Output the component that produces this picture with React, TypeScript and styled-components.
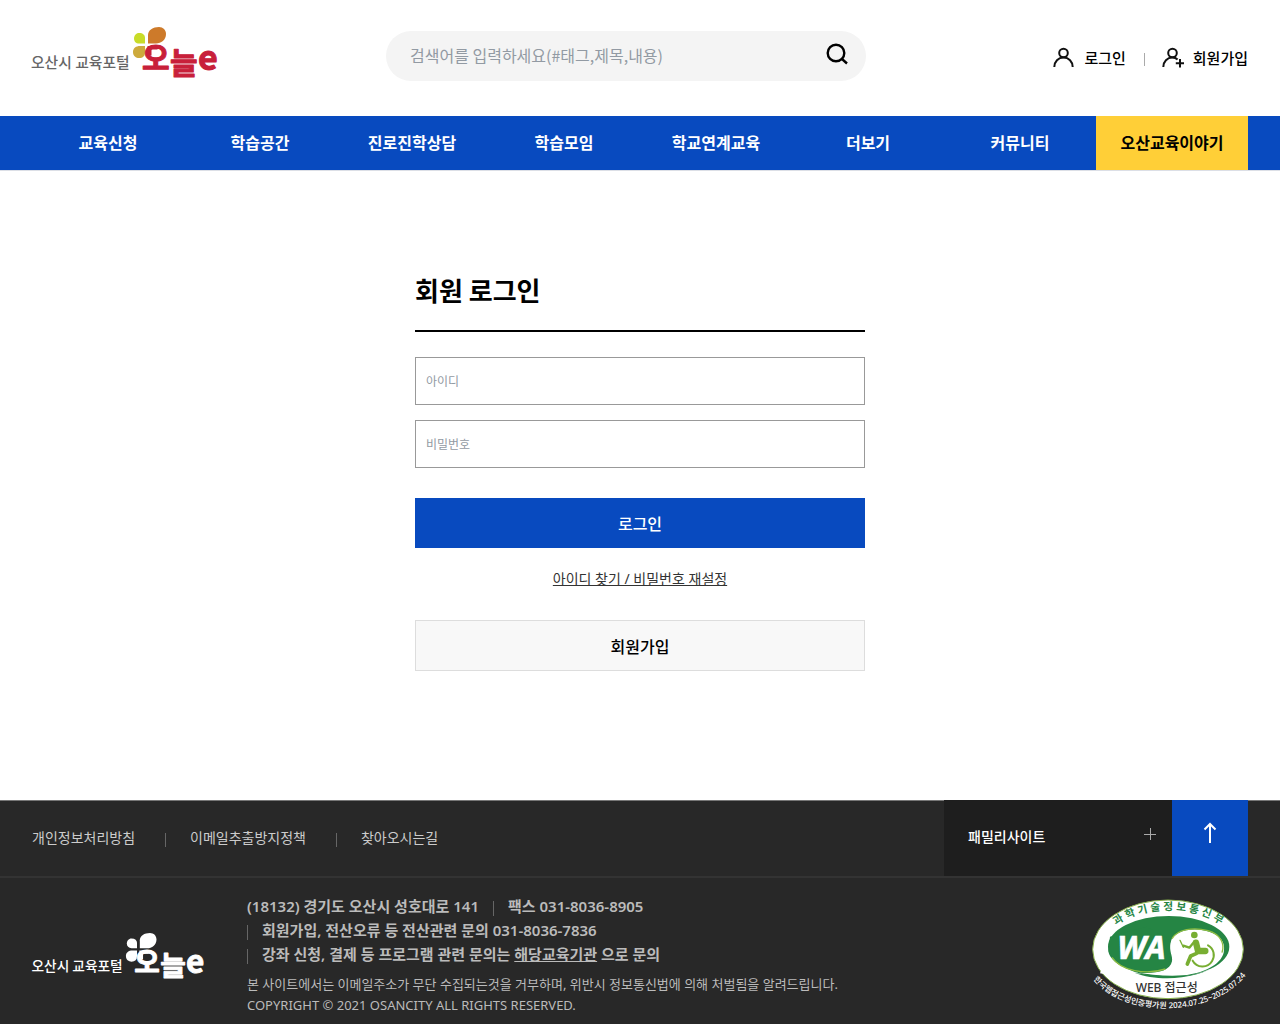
import React from "react";
import styled, { createGlobalStyle } from "styled-components";

const BLUE = "#084abf";
const FONT = '"Noto Sans", "Noto Sans CJK KR", sans-serif';
const FONT_KR = '"Noto Sans CJK KR", sans-serif';

const GlobalStyle = createGlobalStyle`
  *, *::before, *::after { box-sizing: border-box; }
  body { margin: 0; background: #fff; color: #000; font-family: ${FONT}; font-size: 16px; line-height: 24px; }
  a { color: inherit; text-decoration: none; }
  ul, p, h1 { margin: 0; padding: 0; }
  ul { list-style: none; }
  button, input { font-family: inherit; margin: 0; }
  button { cursor: pointer; }
`;

const Page = styled.div`
  display: flex;
  flex-direction: column;
  min-height: 100vh;
`;

const Header = styled.header`
  display: flex;
  align-items: center;
  height: 116px;
  padding: 0 32px;
`;

const LogoLink = styled.a`
  display: block;
  flex: none;
  line-height: 0;
`;

const LogoDrawing = styled.svg`
  overflow: visible;
`;

const HeaderLogo = styled(LogoLink)`
  margin: 0 168px 10px 0;
`;

const SearchForm = styled.form`
  display: flex;
  align-items: center;
  flex: 0 1 480px;
  height: 50px;
  margin-bottom: 4px;
  padding: 0 17px 0 24px;
  border-radius: 25px;
  background: #f4f4f4;
`;

const SearchInput = styled.input`
  flex: 1;
  min-width: 0;
  height: 48px;
  padding: 0 0 2px;
  border: 0;
  outline: 0;
  background: transparent;
  font-family: ${FONT_KR};
  font-size: 16px;
  &::placeholder { color: #929aa3; opacity: 1; }
`;

const IconButton = styled.button`
  display: flex;
  padding: 0 0 4px;
  border: 0;
  background: transparent;
`;

const UserMenu = styled.ul`
  display: flex;
  align-items: center;
  margin-left: auto;
`;

const UserItem = styled.li`
  display: flex;
  align-items: center;
  & + &::before {
    content: "";
    width: 1px;
    height: 13px;
    margin: 2px 17px 0 18px;
    background: #aaa;
  }
`;

const UserLink = styled.a`
  display: flex;
  align-items: center;
  gap: 9px;
  font-size: 15px;
  font-weight: 500;
`;

const Nav = styled.nav`
  padding: 0 32px;
  background: ${BLUE};
  border-bottom: 1px solid #dcdfe6;
`;

const NavList = styled.ul`
  display: grid;
  grid-template-columns: repeat(8, 1fr);
`;

const NavLink = styled.a<{ $accent?: boolean }>`
  display: block;
  height: 54px;
  line-height: 54px;
  text-align: center;
  font-weight: 700;
  color: ${(p) => (p.$accent ? "#000" : "#fff")};
  background: ${(p) => (p.$accent ? "#ffcf37" : "transparent")};
`;

const Main = styled.main`
  display: flex;
  flex-direction: column;
  flex: 1;
  width: 100%;
  max-width: 450px;
  margin: 0 auto;
  padding: 99px 0 129px;
`;

const Title = styled.h1`
  padding-bottom: 20px;
  margin-bottom: 25px;
  border-bottom: 2px solid #000;
  font-family: ${FONT_KR};
  font-size: 26px;
  line-height: 40px;
  font-weight: 700;
`;

const LoginForm = styled.form`
  display: flex;
  flex-direction: column;
  gap: 15px;
`;

const Field = styled.input`
  width: 100%;
  height: 48px;
  padding: 0 10px;
  border: 1px solid #999;
  border-radius: 0;
  background: #fff;
  font-size: 12px;
  &::placeholder { color: #929aa3; opacity: 1; }
`;

const SubmitButton = styled.button`
  height: 50px;
  margin-top: 15px;
  padding: 0;
  border: 0;
  background: ${BLUE};
  color: #fff;
  font-size: 16px;
  font-weight: 500;
`;

const FindLink = styled.a`
  align-self: center;
  margin: 19px 0 29px;
  color: #333;
  font-size: 14px;
  text-decoration: underline;
`;

const JoinLink = styled.a`
  height: 51px;
  border: 1px solid #ddd;
  background: #f8f8f8;
  line-height: 52px;
  text-align: center;
  font-weight: 500;
`;

const Footer = styled.footer`
  background: #282828;
  color: #bbb;
`;

const FooterBar = styled.div`
  display: flex;
  justify-content: space-between;
  height: 78px;
  padding: 0 32px;
  border-bottom: 2px solid #333;
  box-shadow: inset 0 1px 0 #777;
`;

const PolicyList = styled.ul`
  display: flex;
  align-items: center;
`;

const PolicyItem = styled.li`
  display: flex;
  align-items: center;
  font-size: 14px;
  color: #ccc;
  & + &::before {
    content: "";
    width: 1px;
    height: 14px;
    margin: 4px 24px 0 30px;
    background: #666;
  }
`;

const FooterActions = styled.div`
  display: flex;
`;

const FamilyButton = styled.button`
  display: flex;
  align-items: center;
  justify-content: space-between;
  width: 228px;
  padding: 0 16px 4px 24px;
  border: 0;
  background: #1e1e1e;
  color: #fff;
  font-size: 14px;
  font-weight: 500;
`;

const TopLink = styled.a`
  display: flex;
  align-items: center;
  justify-content: center;
  width: 76px;
  padding-bottom: 10px;
  background: ${BLUE};
`;

const FooterBody = styled.div`
  display: flex;
  align-items: flex-start;
  padding: 16px 32px 8px;
`;

const FooterLogo = styled(LogoLink)`
  margin: 38px 42px 0 0;
`;

const Contact = styled.div`
  flex: 1;
  font-size: 15px;
  font-weight: 600;
`;

const ContactRow = styled.p`
  display: flex;
  align-items: center;
`;

const Separator = styled.span<{ $inner?: boolean }>`
  width: 1px;
  height: 15px;
  margin: 4px 14px 0 ${(p) => (p.$inner ? "14px" : "0")};
  background: #666;
`;

const Underlined = styled.a`
  text-decoration: underline;
`;

const Notice = styled.p`
  margin-top: 8px;
  font-size: 13px;
  line-height: 21px;
  font-weight: 400;
`;

const Badge = styled.a`
  flex: none;
  margin-top: 2px;
  line-height: 0;
`;

function Logo({ width, mono }: { width: number; mono?: boolean }) {
  const c = (colour: string) => (mono ? "#fff" : colour);
  const red = c("#c8203a");
  return (
    <LogoDrawing width={width} height={Math.round((width * 54) / 186)} viewBox="0 0 186 54" role="img" aria-label="오산시 교육포털 오늘e">
      <path d="M116 17.500V9C116 4 121 1 127 1c4 0 7 3 7 7 0 6-5 9.500-10 9.500Z" fill={c("#cd7a2a")} />
      <path d="M113 17.500h-6c-3 0-5-2-5-5s2-5.500 5-5.500c4 0 6 2 6 5Z" fill={c("#c8dc28")} />
      <path d="M113 20v6c0 4-2 6-6 6-3 0-6-2-6-6 0-4 3-6 7-6Z" fill={c("#cdaa3c")} />
      <path d="M115.500 20h10v3.500h-6v6h-4Z" fill={red} />
      <g fontFamily={FONT_KR}>
        <text x="-1" y="42" fontSize="14.800" fontWeight="500" fill={c("#666")}>오산시 교육포털</text>
        <g fontWeight="700" fill={red} stroke={red} strokeWidth="1" strokeLinejoin="round">
          <text x="110" y="43" fontSize="30">오</text>
          <text x="138" y="48" fontSize="30">늘</text>
          <text x="166" y="44" fontSize="34">e</text>
        </g>
      </g>
    </LogoDrawing>
  );
}

function UserIcon({ plus }: { plus?: boolean }) {
  return (
    <svg width="22" height="22" viewBox="0 0 22 22" fill="none" stroke="#111" strokeWidth="2" aria-hidden="true">
      <circle cx="10.500" cy="6" r="4.300" />
      <path d={plus ? "M1.300 20c0-5.500 4-9.500 9-9.500 2 0 4 .7 5.300 2" : "M1.300 20c0-5.500 4-9.500 9.200-9.500s9.200 4 9.200 9.500"} />
      {plus && <path d="M18 12v8.500M13.800 16.200h8.200" />}
    </svg>
  );
}

function WebAccessibilityMark() {
  return (
    <svg width="160" height="115" viewBox="24 18 480 345" role="img" aria-label="과학기술정보통신부 WEB 접근성">
      <defs>
        <path id="ministry" d="M108 106C190 46 340 46 422 104" />
        <path id="validity" d="M38 266C130 386 400 386 500 254" />
      </defs>
      <ellipse cx="264" cy="178" rx="226" ry="148" fill="#fff" stroke="#86b04a" strokeWidth="3" />
      <ellipse cx="266" cy="170" rx="182" ry="92" fill="#258544" />
      <path d="M84 188C92 222 130 243 178 248C222 252 270 246 276 214C279 198 266 184 272 156C280 124 330 112 376 122C422 132 438 158 431 188C422 224 370 250 310 256C260 260 210 254 163 246C168 258 174 266 180 270L60 250Z" fill="#fff" />
      <path d="M85 184C90 212 128 240 184 242C234 244 272 232 270 203C268 186 262 176 273 152L200 110L90 140Z" fill="#258544" />
      <path d="M163 248C240 278 360 266 416 222C438 204 447 186 447 170C440 226 370 254 300 258C248 260 200 254 163 248Z" fill="#258544" />
      <path d="M276 146C292 118 340 110 384 122C422 133 435 160 426 188" fill="none" stroke="#8fbd42" strokeWidth="4" />
      <path d="M96 202C122 242 198 256 256 237" fill="none" stroke="#8fbd42" strokeWidth="4" />
      <g fill="none" stroke="#78ae32" strokeLinecap="round" strokeLinejoin="round">
        <path d="M384 166C402 176 406 198 396 214C382 236 350 234 338 212" strokeWidth="6" />
        <path d="M348 158L354 183H376" strokeWidth="19" />
        <path d="M350 190L332 198L322 222" strokeWidth="11" />
        <path d="M344 154L328 173L310 167" strokeWidth="7" />
        <path d="M310 172L300 151" strokeWidth="4" />
      </g>
      <circle cx="343" cy="135" r="10" fill="#78ae32" />
      <g fontFamily={FONT}>
        <text x="112" y="206" fontSize="96" fontWeight="700" fontStyle="italic" fill="#fff" stroke="#fff" strokeWidth="2">WA</text>
        <text fontSize="32" fontWeight="700" fill="#258544">
          <textPath href="#ministry" startOffset="50%" textAnchor="middle">과 학 기 술 정 보 통 신 부</textPath>
        </text>
        <text x="260" y="307" fontSize="36" fontWeight="500" fill="#333" textAnchor="middle">WEB 접근성</text>
        <text fontSize="24" fontWeight="500" fill="#fff">
          <textPath href="#validity" startOffset="50%" textAnchor="middle">한국웹접근성인증평가원 2024.07.25~2025.07.24</textPath>
        </text>
      </g>
    </svg>
  );
}

const menu = ["교육신청", "학습공간", "진로진학상담", "학습모임", "학교연계교육", "더보기", "커뮤니티", "오산교육이야기"];
const policies = ["개인정보처리방침", "이메일추출방지정책", "찾아오시는길"];

export default function App() {
  return (
    <Page>
      <GlobalStyle />
      <Header>
        <HeaderLogo href="#"><Logo width={186} /></HeaderLogo>
        <SearchForm role="search" onSubmit={(e) => e.preventDefault()}>
          <SearchInput type="text" aria-label="검색어" placeholder="검색어를 입력하세요(#태그,제목,내용)" />
          <IconButton type="submit" aria-label="검색">
            <svg width="24" height="24" viewBox="0 0 24 24" fill="none" stroke="#000" strokeWidth="2.400" aria-hidden="true">
              <circle cx="11" cy="11" r="8.300" />
              <path d="M17 17l5 4.500" />
            </svg>
          </IconButton>
        </SearchForm>
        <UserMenu>
          <UserItem><UserLink href="#"><UserIcon />로그인</UserLink></UserItem>
          <UserItem><UserLink href="#"><UserIcon plus />회원가입</UserLink></UserItem>
        </UserMenu>
      </Header>

      <Nav>
        <NavList>
          {menu.map((name, i) => (
            <li key={name}><NavLink href="#" $accent={i === menu.length - 1}>{name}</NavLink></li>
          ))}
        </NavList>
      </Nav>

      <Main>
        <Title>회원 로그인</Title>
        <LoginForm onSubmit={(e) => e.preventDefault()}>
          <Field type="text" aria-label="아이디" placeholder="아이디" />
          <Field type="password" aria-label="비밀번호" placeholder="비밀번호" />
          <SubmitButton type="submit">로그인</SubmitButton>
        </LoginForm>
        <FindLink href="#">아이디 찾기 / 비밀번호 재설정</FindLink>
        <JoinLink href="#">회원가입</JoinLink>
      </Main>

      <Footer>
        <FooterBar>
          <PolicyList>
            {policies.map((name) => (
              <PolicyItem key={name}><a href="#">{name}</a></PolicyItem>
            ))}
          </PolicyList>
          <FooterActions>
            <FamilyButton type="button">
              패밀리사이트
              <svg width="12" height="18" viewBox="0 0 12 18" stroke="#aaa" aria-hidden="true">
                <path d="M6.500 1v12M0 7.500h12" />
              </svg>
            </FamilyButton>
            <TopLink href="#" aria-label="맨 위로">
              <svg width="14" height="22" viewBox="0 0 14 22" fill="none" stroke="#fff" strokeWidth="2" aria-hidden="true">
                <path d="M7 21V2M1.500 7.500L7 2l5.500 5.500" />
              </svg>
            </TopLink>
          </FooterActions>
        </FooterBar>
        <FooterBody>
          <FooterLogo href="#"><Logo width={173} mono /></FooterLogo>
          <Contact>
            <ContactRow>(18132) 경기도 오산시 성호대로 141<Separator $inner />팩스 031-8036-8905</ContactRow>
            <ContactRow><Separator />회원가입, 전산오류 등 전산관련 문의 031-8036-7836</ContactRow>
            <ContactRow>
              <Separator />
              <span>강좌 신청, 결제 등 프로그램 관련 문의는 <Underlined href="#">해당교육기관</Underlined> 으로 문의</span>
            </ContactRow>
            <Notice>
              본 사이트에서는 이메일주소가 무단 수집되는것을 거부하며, 위반시 정보통신법에 의해 처벌됨을 알려드립니다.
              <br />
              COPYRIGHT © 2021 OSANCITY ALL RIGHTS RESERVED.
            </Notice>
          </Contact>
          <Badge href="#"><WebAccessibilityMark /></Badge>
        </FooterBody>
      </Footer>
    </Page>
  );
}
